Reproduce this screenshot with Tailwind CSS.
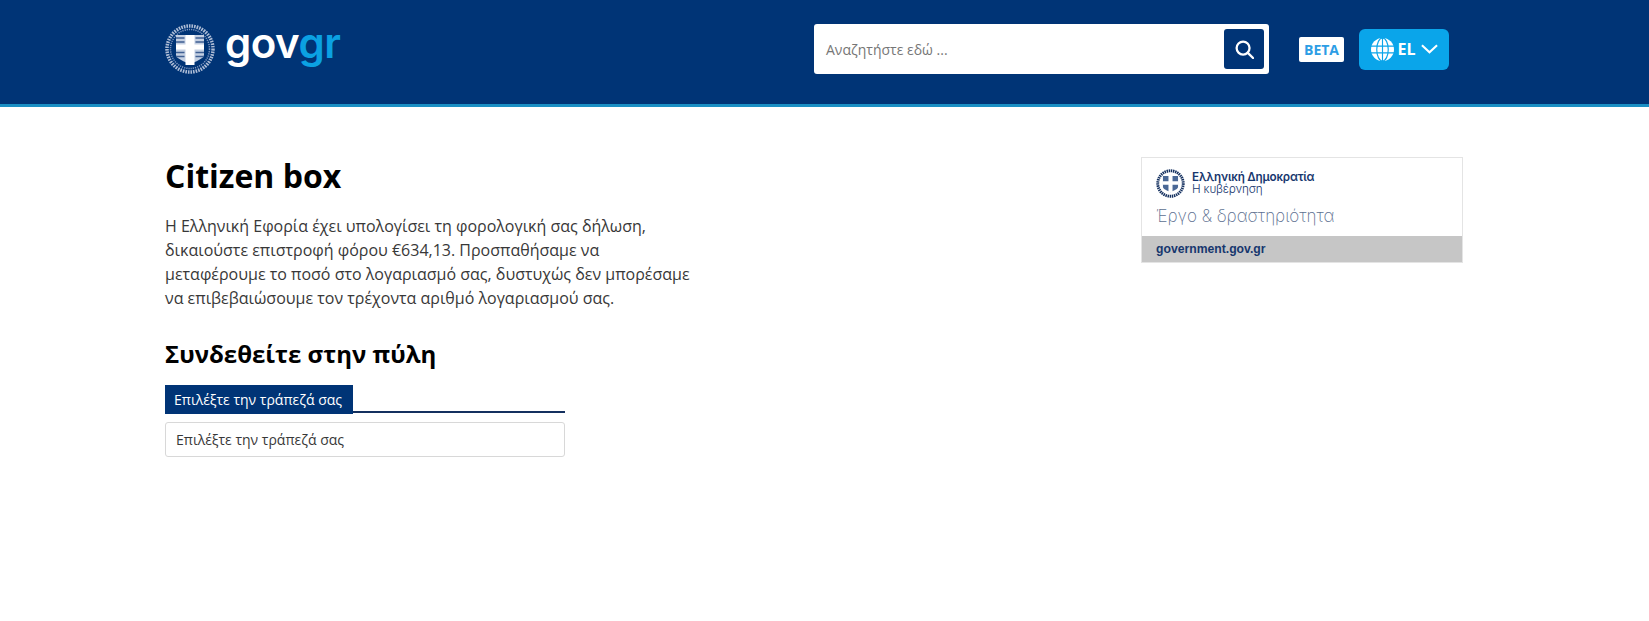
<!DOCTYPE html>
<html lang="el">
<head>
<meta charset="utf-8">
<title>Citizen box</title>
<script src="https://cdn.jsdelivr.net/npm/@tailwindcss/browser@4"></script>
</head>
<body class="bg-white font-['Open_Sans',sans-serif] h-[621px] overflow-hidden">
<header class="h-[107px] bg-[#003476] border-b-[3px] border-[#1a8fc4] pl-[165px] pr-[200px] flex items-start justify-between">
  <div class="flex items-center gap-[10px] mt-[24px]">
    <svg viewBox="0 0 50 50" class="w-[50px] h-[50px]">
      <circle cx="25" cy="25" r="23" fill="none" stroke="#aebdd6" stroke-width="3.500" stroke-dasharray="1.600 1"/>
      <circle cx="25" cy="25" r="19.500" fill="none" stroke="#7f97bf" stroke-width="1.500" stroke-dasharray="1.200 1"/>
      <path d="M11 11h28v20c0 4-9 6-14 10c-5-4-14-6-14-10z" fill="#c3cfe2"/>
      <path d="M11 14h8.500M11 18h8.500M30.500 14h8.500M30.500 18h8.500M11 28.500h8.500M11 32.500h8.500M30.500 28.500h8.500M30.500 32.500h8.500" stroke="#3f5f93" stroke-width="1.600"/>
      <path d="M20.500 11h9v9.500h9.500v5h-9.500v15.500h-9v-15.500h-9.500v-5h9.500z" fill="#fff"/>
    </svg>
    <div class="font-['Inter',sans-serif] font-semibold text-[42px] leading-[40px] tracking-[-0.5px] text-white -mt-[12px]">gov<span class="text-[#0ba1e2]">gr</span></div>
  </div>
  <div class="flex items-center mt-[24px]">
    <div class="w-[455px] h-[50px] bg-white rounded-[3px] pl-[12px] pr-[5px] flex items-center justify-between">
      <span class="text-[14px] text-[#767676]">Αναζητήστε εδώ ...</span>
      <button class="w-[40px] h-[40px] rounded-[3px] bg-[#003476] flex items-center justify-center">
        <svg viewBox="0 0 20 20" class="w-[19px] h-[19px]" fill="none" stroke="#fff" stroke-width="2.400"><circle cx="8.500" cy="8.500" r="6.800"/><path d="M13.500 13.500L19 19" stroke-linecap="round"/></svg>
      </button>
    </div>
    <div class="ml-[30px] w-[45px] h-[25px] bg-white rounded-[2px] flex items-center justify-center text-[14px] font-bold text-[#2d9de5]">BETA</div>
    <button class="ml-[15px] w-[90px] h-[41px] bg-[#0aa5ea] rounded-[6px] flex items-center justify-center gap-[5px] text-white text-[16px] font-bold">
      <svg viewBox="0 0 24 24" class="w-[23px] h-[23px] shrink-0"><circle cx="12" cy="12" r="12" fill="#fff"/><g stroke="#0aa5ea" stroke-width="1.200" fill="none"><path d="M0 8.500h24M0 15.500h24M12 0v24"/><ellipse cx="12" cy="12" rx="6" ry="12"/></g></svg>
      <span class="-ml-[1px]">EL</span>
      <svg viewBox="0 0 18 10" class="w-[17px] h-[10px] shrink-0" fill="none" stroke="#fff" stroke-width="2.200"><path d="M1 1l8 7.500L17 1"/></svg>
    </button>
  </div>
</header>
<main class="pl-[165px] pr-[186px] flex justify-between items-start">
  <div class="w-[530px] pt-[47px]">
    <h1 class="text-[32px] leading-[44px] font-bold text-black">Citizen box</h1>
    <p class="mt-[16px] text-[16px] leading-[24px] text-[#383838]">Η Ελληνική Εφορία έχει υπολογίσει τη φορολογική σας δήλωση, δικαιούστε επιστροφή φόρου €634,13. Προσπαθήσαμε να μεταφέρουμε το ποσό στο λογαριασμό σας, δυστυχώς δεν μπορέσαμε να επιβεβαιώσουμε τον τρέχοντα αριθμό λογαριασμού σας.</p>
    <h2 class="mt-[27px] text-[24px] leading-[33px] font-bold text-black">Συνδεθείτε στην πύλη</h2>
    <div class="mt-[15px] w-[400px] border-b-2 border-[#14305f] h-[28px]">
      <span class="inline-block h-[29px] pl-[9px] pr-[11px] bg-[#003476] text-white text-[14px] leading-[29px]">Επιλέξτε την τράπεζά σας</span>
    </div>
    <div class="mt-[9px] w-[400px] h-[35px] border border-[#d8d8d8] rounded-[3px] pl-[10px] flex items-center text-[14px] text-[#383838]">Επιλέξτε την τράπεζά σας</div>
  </div>
  <a class="mt-[50px] w-[322px] h-[106px] border border-[#e4e4e4] flex flex-col">
    <div class="flex-1 pl-[14px] pt-[11px]">
      <div class="flex items-center gap-[7px]">
        <svg viewBox="0 0 50 50" class="w-[29px] h-[29px]">
          <circle cx="25" cy="25" r="22" fill="none" stroke="#14305f" stroke-width="5" stroke-dasharray="2.500 1.200"/>
          <path d="M12 12h26v19c0 4-8 6-13 9c-5-3-13-5-13-9z" fill="#4a6896"/>
          <path d="M21.500 12h7v9h9.500v6h-9.500v13h-7v-13h-9.500v-6h9.500z" fill="#fff"/>
        </svg>
        <div class="text-[#17376e] font-['Inter',sans-serif] -mt-[2px]">
          <div class="text-[11.700px] leading-[13px] font-semibold tracking-[-0.2px]">Ελληνική Δημοκρατία</div>
          <div class="text-[11.700px] leading-[11px] font-light tracking-[-0.2px]">Η κυβέρνηση</div>
        </div>
      </div>
      <div class="mt-[6px] font-['Inter',sans-serif] font-extralight text-[17px] leading-[24px] text-[#5c6f90] whitespace-nowrap">Έργο &amp; δραστηριότητα</div>
    </div>
    <div class="h-[26px] bg-[#c6c6c6] pl-[14px] flex items-center font-['Liberation_Sans',sans-serif] font-bold text-[12.200px] text-[#17376e]">government.gov.gr</div>
  </a>
</main>
</body>
</html>
